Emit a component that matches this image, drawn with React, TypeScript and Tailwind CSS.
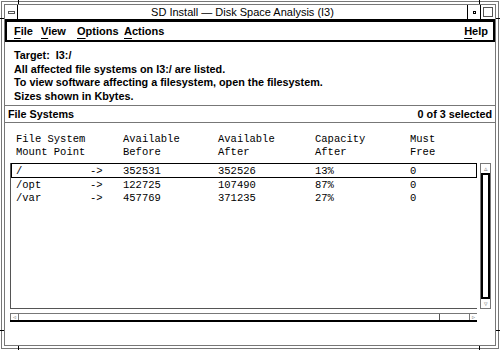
import React from "react";

const rows = [
  { mount: "/", before: "352531", after: "352526", cap: "13%", free: "0" },
  { mount: "/opt", before: "122725", after: "107490", cap: "87%", free: "0" },
  { mount: "/var", before: "457769", after: "371235", cap: "27%", free: "0" },
];

const sans = { fontFamily: '"Liberation Sans", Arial, sans-serif' };
const mono = { fontFamily: '"Liberation Mono", "Courier New", monospace' };

function Mnemonic({ first, rest }: { first: string; rest: string }) {
  return (
    <span>
      <span className="underline underline-offset-[3px] decoration-1">{first}</span>
      {rest}
    </span>
  );
}

function Row({ mount, before, after, cap, free, focused }: {
  mount: string; before: string; after: string; cap: string; free: string; focused?: boolean;
}) {
  return (
    <div
      className={`flex items-center pt-px leading-[13px] border ${
        focused ? "border-black h-[15px]" : "border-transparent h-[13px]"
      }`}
    >
      <span className="w-[78px] pl-[4px]">{mount}</span>
      <span className="w-[33px]">-&gt;</span>
      <span className="w-[95px]">{before}</span>
      <span className="w-[97px]">{after}</span>
      <span className="w-[95px]">{cap}</span>
      <span>{free}</span>
    </div>
  );
}

export default function App() {
  return (
    <div className="relative w-[500px] h-[350px] bg-white text-black overflow-hidden" style={sans}>
      {/* window frame */}
      <div className="m-px h-[348px] border border-[#777] p-[2px]">
        <div className="h-full flex flex-col border border-[#777]">
          {/* title bar */}
          <div className="flex h-[15px] border-b border-black">
            <div className="w-[13px] border-r border-black flex items-center justify-center">
              <div className="w-[7px] h-[3px] border border-[#555]" />
            </div>
            <div className="flex-1 flex items-center justify-center text-[11px] leading-none">
              SD Install — Disk Space Analysis (I3)
            </div>
            <div className="w-[13px] border-l border-black flex items-center justify-center">
              <div className="w-[3px] h-[3px] border border-black" />
            </div>
            <div className="w-[15px] border-l border-black flex items-center justify-center">
              <div className="w-[10px] h-[10px] border border-[#555]" />
            </div>
          </div>

          {/* menu bar */}
          <div className="flex h-[22px] items-center border-2 border-black pl-[7px] pr-[5px] text-[11px] font-bold">
            <span className="w-[27px]"><Mnemonic first="F" rest="ile" /></span>
            <span className="w-[36px]"><Mnemonic first="V" rest="iew" /></span>
            <span className="w-[47px]"><Mnemonic first="O" rest="ptions" /></span>
            <span><Mnemonic first="A" rest="ctions" /></span>
            <span className="ml-auto"><Mnemonic first="H" rest="elp" /></span>
          </div>

          {/* message */}
          <div className="h-[63px] pt-[7px] pl-[9px] text-[10.8px] font-bold leading-[13.6px]">
            <div>Target:&nbsp; I3:/</div>
            <div>All affected file systems on I3:/ are listed.</div>
            <div>To view software affecting a filesystem, open the filesystem.</div>
            <div>Sizes shown in Kbytes.</div>
          </div>

          {/* list header */}
          <div className="flex h-[18px] items-center justify-between border-y border-[#777] px-[3px] text-[10.8px] font-bold">
            <span>File Systems</span>
            <span>0 of 3 selected</span>
          </div>

          {/* column titles */}
          <div className="flex pt-[10px] pl-[11px] text-[10.5px] leading-[13px] h-[40px]" style={mono}>
            <div className="w-[107px]">File System<br />Mount Point</div>
            <div className="w-[95px]">Available<br />Before</div>
            <div className="w-[97px]">Available<br />After</div>
            <div className="w-[95px]">Capacity<br />After</div>
            <div>Must<br />Free</div>
          </div>

          {/* list + vertical scrollbar */}
          <div className="flex gap-[3px] pl-[5px]">
            <div className="w-[467px] h-[146px] border-l border-b border-[#555] text-[10.5px]" style={mono}>
              <Row {...rows[0]} focused />
              <Row {...rows[1]} />
              <Row {...rows[2]} />
            </div>
            <div className="w-[11px] h-[146px] flex flex-col border border-[#777]">
              <div className="h-[9px] flex items-center justify-center text-[#777] text-[7px] leading-none">▵</div>
              <div className="flex-1 border-2 border-black" />
              <div className="h-[9px] flex items-center justify-center text-[#777] text-[7px] leading-none">▿</div>
            </div>
          </div>

          {/* horizontal scrollbar */}
          <div className="ml-[5px] mt-[4px] w-[467px] h-[9px] flex border-t border-[#777] border-b-2 border-b-black">
            <div className="w-[9px] border-x border-[#777] flex items-center justify-center text-[#777] text-[6px] leading-none">◃</div>
            <div className="w-[421px] border-r border-[#555]" />
            <div className="flex-1" />
            <div className="w-[8px] border-l border-[#777] flex items-center justify-center text-[#777] text-[6px] leading-none">▹</div>
          </div>
        </div>
      </div>

      {/* frame resize ticks */}
      <div className="absolute left-[18px] top-0 w-px h-[4px] bg-black" />
      <div className="absolute left-[479px] top-0 w-px h-[4px] bg-black" />
      <div className="absolute left-[18px] bottom-0 w-px h-[4px] bg-black" />
      <div className="absolute left-[479px] bottom-0 w-px h-[4px] bg-black" />
      <div className="absolute left-0 top-[330px] w-[4px] h-px bg-black" />
      <div className="absolute right-0 top-[330px] w-[4px] h-px bg-black" />
      <div className="absolute left-0 top-[18px] w-[4px] h-px bg-black" />
      <div className="absolute right-0 top-[18px] w-[4px] h-px bg-black" />
    </div>
  );
}
